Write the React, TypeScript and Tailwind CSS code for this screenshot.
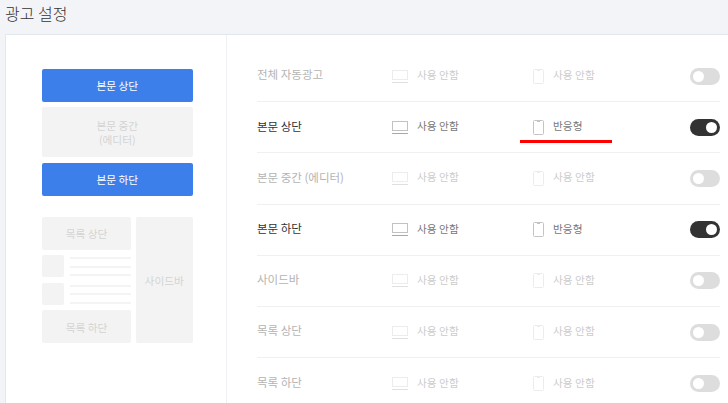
const rows = [
  { name: '전체 자동광고', pc: '사용 안함', mobile: '사용 안함', on: false },
  { name: '본문 상단', pc: '사용 안함', mobile: '반응형', on: true },
  { name: '본문 중간 (에디터)', pc: '사용 안함', mobile: '사용 안함', on: false },
  { name: '본문 하단', pc: '사용 안함', mobile: '반응형', on: true },
  { name: '사이드바', pc: '사용 안함', mobile: '사용 안함', on: false },
  { name: '목록 상단', pc: '사용 안함', mobile: '사용 안함', on: false },
  { name: '목록 하단', pc: '사용 안함', mobile: '사용 안함', on: false },
];

function Laptop({ on }: { on: boolean }) {
  const c = on ? '#c2c2c2' : '#ececec';
  const base = on ? '#a8a8a8' : '#e0e0e0';
  return (
    <svg width="16" height="13" viewBox="0 0 16 13" fill="none" className="shrink-0">
      <rect x="0.5" y="0.5" width="15" height="9" stroke={c} />
      <path d="M0 12.5H16" stroke={base} />
    </svg>
  );
}

function Phone({ on }: { on: boolean }) {
  const c = on ? '#c4c4c4' : '#ececec';
  return (
    <svg width="11" height="15" viewBox="0 0 11 15" fill="none" className="shrink-0">
      <rect x="0.5" y="0.5" width="10" height="14" rx="1" stroke={c} />
      <path d="M4 1.5H7" stroke={c} />
    </svg>
  );
}

function Toggle({ on }: { on: boolean }) {
  return (
    <div className={`flex h-[17px] w-[30px] items-center rounded-full px-[3px] ${on ? 'justify-end bg-[#333333]' : 'justify-start bg-[#dddddd]'}`}>
      <div className="h-[11px] w-[11px] rounded-full bg-white" />
    </div>
  );
}

function Block({ className, children }: { className: string; children?: React.ReactNode }) {
  return (
    <div className={`flex items-center justify-center rounded-[2px] bg-[#f3f3f3] pt-[2px] text-center text-[10.7px] leading-[14px] text-[#d4d4d4] ${className}`}>
      {children}
    </div>
  );
}

function ListItem() {
  return (
    <div className="flex gap-[6px]">
      <div className="h-[22px] w-[22px] rounded-[2px] bg-[#f3f3f3]" />
      <div className="flex flex-1 flex-col gap-[6.4px] pt-[2px]">
        <div className="h-[2px] bg-[#f4f4f4]" />
        <div className="h-[2px] bg-[#f4f4f4]" />
        <div className="h-[2px] bg-[#f4f4f4]" />
      </div>
    </div>
  );
}

export default function App() {
  return (
    <div
      className="h-[403px] w-[728px] overflow-hidden bg-[#f3f4f7] pl-[5px]"
      style={{ fontFamily: '"Noto Sans CJK KR", "Noto Sans", sans-serif' }}
    >
      <h1 className="h-[34px] pt-[1px] text-[16px] leading-[24px] font-light text-[#333333]">광고 설정</h1>

      <div className="relative flex h-[400px] border-t border-l border-[#e3e8f0] bg-white">
        {/* 왼쪽 미리보기 */}
        <div className="w-[221px] shrink-0 border-r border-[#eef0f3] pt-[33.5px] pl-[36px]">
          <div className="flex w-[150.5px] flex-col gap-[5.5px]">
            <div className="flex h-[33px] items-center justify-center rounded-[2px] bg-[#3d7fea] pt-[2px] text-[10.7px] text-white">본문 상단</div>
            <Block className="h-[50px]">본문 중간<br />(에디터)</Block>
            <div className="flex h-[33px] items-center justify-center rounded-[2px] bg-[#3d7fea] pt-[2px] text-[10.7px] text-white">본문 하단</div>
          </div>

          <div className="mt-[21px] flex w-[150.5px] gap-[5px]">
            <div className="flex w-[89px] flex-col gap-[5.67px]">
              <Block className="h-[33px]">목록 상단</Block>
              <ListItem />
              <ListItem />
              <Block className="h-[33px]">목록 하단</Block>
            </div>
            <Block className="w-[56.5px]">사이드바</Block>
          </div>
        </div>

        {/* 오른쪽 설정 목록 */}
        <div className="box-content w-[463px] pt-[16px] pl-[30px]">
          {rows.map((row, i) => (
            <div
              key={row.name}
              className={`flex h-[51.2px] items-center ${i < rows.length - 1 ? 'border-b border-[#f0f0f0]' : ''}`}
            >
              <div className={`w-[135px] pb-[2px] text-[11.5px] ${row.on ? 'text-[#333333]' : 'text-[#b4b4b4]'}`}>{row.name}</div>
              <div className={`flex w-[141px] items-center gap-[9px] text-[10.7px] ${row.on ? 'text-[#777777]' : 'text-[#cccccc]'}`}>
                <Laptop on={row.on} />
                <span className="pb-[2px]">{row.pc}</span>
              </div>
              <div className={`flex flex-1 items-center gap-[9px] text-[10.7px] ${row.on ? 'text-[#777777]' : 'text-[#cccccc]'}`}>
                <Phone on={row.on} />
                <span className="pb-[2px]">{row.mobile}</span>
              </div>
              <Toggle on={row.on} />
            </div>
          ))}
        </div>

        {/* 빨간 밑줄 */}
        <div className="absolute top-[105px] left-[514px] h-[3px] w-[92px] bg-[#ff0000]" />
      </div>
    </div>
  );
}
